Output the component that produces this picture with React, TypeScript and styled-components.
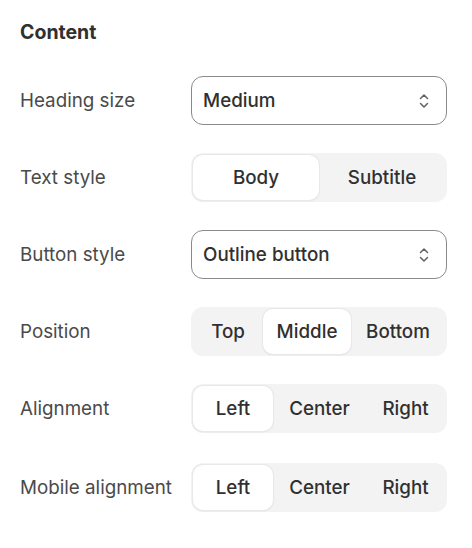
import React from "react";
import styled, { createGlobalStyle } from "styled-components";

const Global = createGlobalStyle`
  html, body { margin: 0; padding: 0; background: #ffffff; }
  body { font-family: Inter, "Noto Sans", sans-serif; -webkit-font-smoothing: antialiased; }
  * { box-sizing: border-box; }
`;

const Panel = styled.div`
  width: 472px;
  padding: 20px 25px 0 20px;
  display: flex;
  flex-direction: column;
`;

const Heading = styled.h2`
  margin: 0 0 32px 0;
  font-size: 19.5px;
  line-height: 24px;
  font-weight: 700;
  color: #303030;
`;

const Rows = styled.div`
  display: flex;
  flex-direction: column;
  gap: 28px;
`;

const Row = styled.div<{ $extraTop?: number }>`
  display: grid;
  grid-template-columns: 171px 256px;
  align-items: center;
  height: 49px;
  margin-top: ${(p) => p.$extraTop ?? 0}px;
`;

const Label = styled.div`
  font-size: 18.8px;
  color: #4a4a4a;
  font-weight: 420;
  white-space: nowrap;
`;

const Select = styled.div`
  height: 49px;
  border: 1px solid #8a8a8a;
  border-radius: 12px;
  display: flex;
  align-items: center;
  justify-content: space-between;
  padding: 0 15px 0 11px;
  font-size: 18.8px;
  font-weight: 500;
  color: #303030;
  background: #fff;
`;

const Segmented = styled.div`
  height: 49px;
  background: #f3f3f3;
  border-radius: 12px;
  padding: 2px;
  display: flex;
`;

const Segment = styled.div<{ $active?: boolean }>`
  flex: 0 0 auto;
  display: flex;
  align-items: center;
  justify-content: center;
  border-radius: 10px;
  font-size: 18.8px;
  font-weight: 500;
  color: #303030;
  background: ${(p) => (p.$active ? "#ffffff" : "transparent")};
  box-shadow: ${(p) =>
    p.$active ? "0 0 0 1px #e8e8e8, 0 1px 2px rgba(0,0,0,0.10)" : "none"};
`;

const Chevrons = () => (
  <svg width="14" height="20" viewBox="0 0 14 20" fill="none">
    <path d="M3.5 7.5 L7 4 L10.5 7.5" stroke="#616161" strokeWidth="1.5" strokeLinecap="round" strokeLinejoin="round" />
    <path d="M3.5 12.5 L7 16 L10.5 12.5" stroke="#616161" strokeWidth="1.5" strokeLinecap="round" strokeLinejoin="round" />
  </svg>
);

type Opt = { label: string; w: number };

const SegmentGroup = ({ options, active }: { options: Opt[]; active: number }) => (
  <Segmented>
    {options.map((o, i) => (
      <Segment key={o.label} $active={i === active} style={{ width: o.w }}>
        {o.label}
      </Segment>
    ))}
  </Segmented>
);

export default function App() {
  return (
    <>
      <Global />
      <Panel>
        <Heading>Content</Heading>
        <Rows>
          <Row>
            <Label>Heading size</Label>
            <Select>
              <span>Medium</span>
              <Chevrons />
            </Select>
          </Row>
          <Row>
            <Label>Text style</Label>
            <SegmentGroup
              active={0}
              options={[
                { label: "Body", w: 126 },
                { label: "Subtitle", w: 126 },
              ]}
            />
          </Row>
          <Row>
            <Label>Button style</Label>
            <Select>
              <span>Outline button</span>
              <Chevrons />
            </Select>
          </Row>
          <Row>
            <Label>Position</Label>
            <SegmentGroup
              active={1}
              options={[
                { label: "Top", w: 70 },
                { label: "Middle", w: 88 },
                { label: "Bottom", w: 94 },
              ]}
            />
          </Row>
          <Row>
            <Label>Alignment</Label>
            <SegmentGroup
              active={0}
              options={[
                { label: "Left", w: 80 },
                { label: "Center", w: 93 },
                { label: "Right", w: 79 },
              ]}
            />
          </Row>
          <Row $extraTop={2}>
            <Label>Mobile alignment</Label>
            <SegmentGroup
              active={0}
              options={[
                { label: "Left", w: 80 },
                { label: "Center", w: 93 },
                { label: "Right", w: 79 },
              ]}
            />
          </Row>
        </Rows>
      </Panel>
    </>
  );
}
